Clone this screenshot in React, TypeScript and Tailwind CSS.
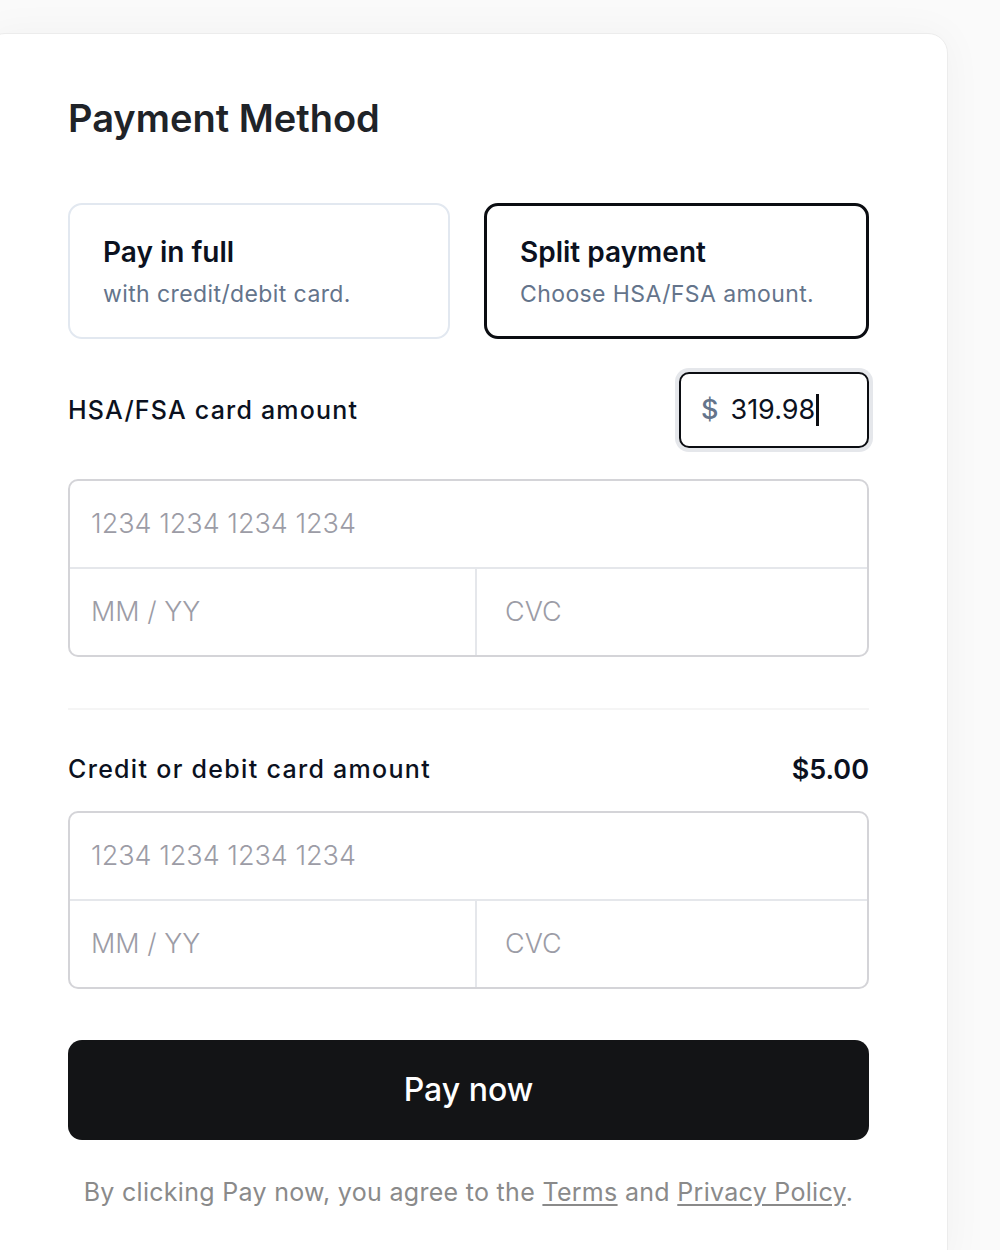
import React from 'react';

const font = { fontFamily: 'Inter, "Noto Sans", sans-serif' };

// ── Option tile ────────────────────────────────────────────────
function OptionTile({ title, sub, active }: { title: string; sub: string; active?: boolean }) {
  return (
    <div
      className={
        active
          ? 'flex h-[136px] flex-col justify-center rounded-[14px] border-[3px] border-[#0b0d12] px-[33px]'
          : 'flex h-[136px] flex-col justify-center rounded-[14px] border-2 border-[#e2e8f0] px-[33px]'
      }
    >
      <div className="text-[28px] font-semibold leading-[36px] text-[#0b1120]">{title}</div>
      <div className="mt-[9px] text-[23px] leading-[30px] tracking-[0.4px] text-[#64748b]">{sub}</div>
    </div>
  );
}

// ── Card element (number / expiry / cvc) ───────────────────────
function CardFields() {
  return (
    <div className="overflow-hidden rounded-[10px] border-2 border-[#d4d4d8] text-[27px] font-light text-[#9c9ca6]">
      <div className="flex h-[86px] items-center px-[21px]">1234 1234 1234 1234</div>
      <div className="grid grid-cols-[407px_1fr] border-t-2 border-[#e5e7eb]">
        <div className="flex h-[86px] items-center border-r-2 border-[#e5e7eb] px-[21px]">MM / YY</div>
        <div className="flex h-[86px] items-center px-[28px]">CVC</div>
      </div>
    </div>
  );
}

export default function App() {
  return (
    <div className="min-h-[1250px] overflow-hidden bg-[#fafafa] pt-[33px]" style={font}>
      <div className="ml-[-15px] w-[963px] rounded-[20px] border border-[#ececec] bg-white pb-[60px] pl-[82px] pr-[78px] pt-[62px] shadow-[0_0_40px_rgba(0,0,0,0.04)]">
        <h1 className="text-[38px] font-semibold leading-[44px] text-[#1f2328]">Payment Method</h1>

        <div className="mt-[63px] grid grid-cols-[382px_1fr] gap-[34px]">
          <OptionTile title="Pay in full" sub="with credit/debit card." />
          <OptionTile title="Split payment" sub="Choose HSA/FSA amount." active />
        </div>

        <div className="mt-[33px] flex items-center justify-between">
          <span className="mt-[2px] text-[25px] font-medium tracking-[1.2px] text-[#0b1120]">HSA/FSA card amount</span>
          <div className="flex h-[76px] w-[190px] items-center rounded-[10px] border-2 border-[#0b0d12] px-[20px] shadow-[0_0_0_4px_#e5e7eb]">
            <span className="text-[27px] font-medium text-[#64748b]">$</span>
            <span className="ml-[12px] text-[27px] text-[#0b1120]">319.98</span>
            <span className="ml-[1px] h-[32px] w-[3px] bg-[#0b0d12]" />
          </div>
        </div>

        <div className="mt-[31px]">
          <CardFields />
        </div>

        <div className="mt-[51px] h-[2px] bg-[#f5f5f5]" />

        <div className="mt-[44px] flex h-[32px] items-center justify-between">
          <span className="text-[25px] font-medium tracking-[1.3px] text-[#0b1120]">Credit or debit card amount</span>
          <span className="text-[27px] font-semibold text-[#0b1120]">$5.00</span>
        </div>

        <div className="mt-[25px]">
          <CardFields />
        </div>

        <button className="mt-[51px] flex h-[100px] w-full items-center justify-center rounded-[14px] bg-[#131416] text-[32px] font-medium text-white">
          Pay now
        </button>

        <p className="mt-[36px] text-center text-[25px] leading-[32px] tracking-[0.3px] text-[#8a8a8a]">
          By clicking Pay now, you agree to the{' '}
          <a className="underline underline-offset-[3px]">Terms</a> and{' '}
          <a className="underline underline-offset-[3px]">Privacy Policy</a>.
        </p>
      </div>
    </div>
  );
}
